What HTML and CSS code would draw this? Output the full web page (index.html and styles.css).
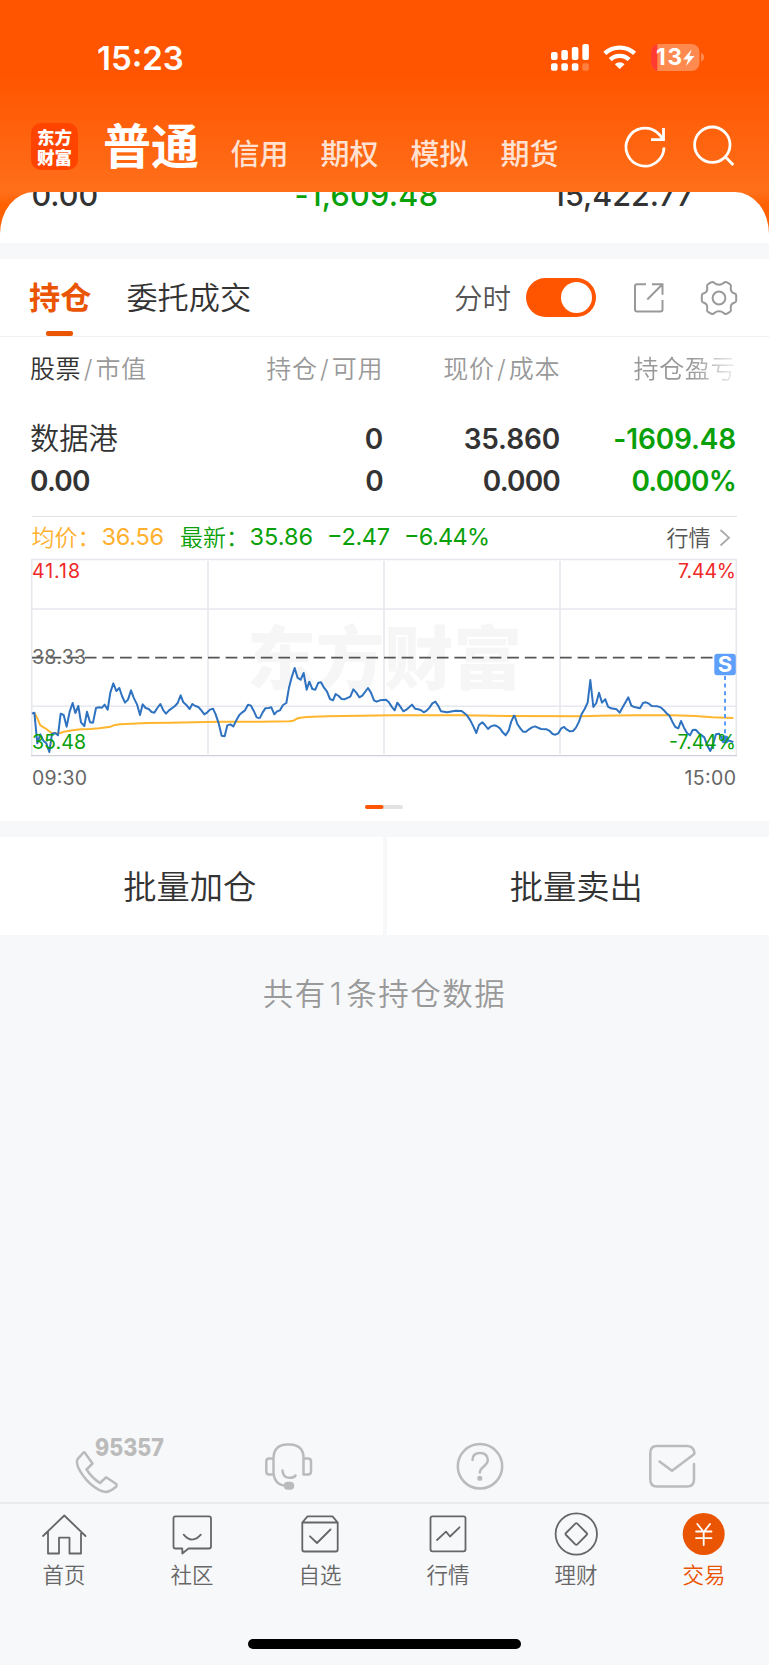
FILE: index.html
```html
<!DOCTYPE html>
<html lang="zh-CN">
<head>
<meta charset="utf-8">
<title>持仓</title>
<link rel="stylesheet" href="styles.css">
</head>
<body>
<div class="app">
  <header class="header">
    <div class="status">
      <span class="clock">15:23</span>
      <svg class="status-icons" width="156" height="30" viewBox="549 42 156 30">
        <g fill="#fff">
          <rect x="551" y="52" width="6.6" height="8" rx="2"/><rect x="561.3" y="50" width="6.6" height="10" rx="2"/><rect x="571.8" y="47" width="6.6" height="13" rx="2"/><rect x="582.3" y="44" width="6.6" height="16" rx="2"/>
          <rect x="551" y="63.3" width="6.6" height="7.4" rx="2"/><rect x="561.3" y="63.3" width="6.6" height="7.4" rx="2"/><rect x="571.8" y="63.3" width="6.6" height="7.4" rx="2"/><rect x="582.3" y="63.3" width="6.6" height="7.4" rx="2" opacity=".25"/>
          <path d="M619.7 69 L614.8 64.2 A7 7 0 0 1 624.6 64.2 Z"/>
        </g>
        <g fill="none" stroke="#fff" stroke-width="4.3">
          <path d="M604.8 53.4 A22 22 0 0 1 634.6 53.4"/>
          <path d="M610.3 59.6 A13.6 13.6 0 0 1 629.1 59.6"/>
        </g>
        <clipPath id="batt"><rect x="651" y="44" width="48.5" height="27" rx="8"/></clipPath>
        <g clip-path="url(#batt)"><rect x="651" y="44" width="49" height="27" fill="#ff8a50"/><rect x="651" y="44" width="6.3" height="27" fill="#ff3b30"/></g>
        <path d="M701 53 q3.2 1.5 3.2 4.3 t-3.2 4.3z" fill="#ff8a50"/>
        <text x="656" y="65.300" class="batt-num" textLength="26">13</text>
        <path d="M691.5 49.5 L683 59.5 h5 L686 66 L694.5 56 h-5z" fill="#fff"/>
      </svg>
    </div>
    <div class="topnav">
      <div class="logo"><span>东方</span><span>财富</span></div>
      <span class="acct-main">普通</span>
      <nav class="accts"><span>信用</span><span>期权</span><span>模拟</span><span>期货</span></nav>
      <svg class="top-icons" width="116" height="46" viewBox="622 124 116 46" fill="none" stroke="#fff" stroke-width="2.8">
        <path d="M664 147.5 A19 19 0 1 1 657.500 132.800 Q660.500 135 662.500 138.500"/><path d="M663.5 128 V139.7 H651"/>
        <circle cx="712.3" cy="144.7" r="17.7"/><path d="M725 156.5 L733.3 165"/>
      </svg>
    </div>
  </header>

  <section class="summary">
    <span class="sum a">0.00</span><span class="sum b">-1,609.48</span><span class="sum c">15,422.77</span>
  </section>

  <section class="panel">
    <div class="tabs">
      <span class="tab active">持仓</span>
      <span class="tab">委托成交</span>
      <span class="fs">分时</span>
      <span class="toggle"><i></i></span>
      <svg class="export" width="32" height="32" viewBox="633 282 32 32" fill="none" stroke="#999" stroke-width="2">
        <path d="M646 284.2 H637 Q635 284.2 635 286.2 V309.500 Q635 311.500 637 311.500 H660.500 Q662.500 311.500 662.500 309.500 V300"/><path d="M652 284.200 H662.500 V294.800 M662.200 284.500 L647.300 299.500"/>
      </svg>
      <svg class="gear" width="38" height="38" viewBox="700 279 38 38" fill="none" stroke="#999" stroke-width="2">
        <circle cx="719" cy="298" r="6.4"/>
        <path d="M711.500 282.200 Q713 281.500 714.300 283 Q716.500 284.700 719 284.700 T723.700 283 Q725 281.500 726.500 282.200 L730 284.200 Q731.500 285.300 730.800 287.300 C730.400 290.500 731.500 292.700 734.700 293.500 Q736.200 294 736.200 295.500 V300.500 Q736.200 302 734.700 302.500 C731.500 303.300 730.400 305.500 730.800 308.700 Q731.500 310.700 730 311.800 L726.500 313.800 Q725 314.500 723.700 313 Q721.500 311.300 719 311.300 T714.300 313 Q713 314.500 711.500 313.800 L708 311.800 Q706.500 310.700 707.200 308.700 C707.600 305.500 706.500 303.300 703.300 302.500 Q701.800 302 701.800 300.500 V295.500 Q701.800 294 703.300 293.500 C706.500 292.700 707.600 290.500 707.200 287.300 Q706.500 285.300 708 284.200 Z"/>
      </svg>
    </div>
    <div class="cols">
      <span><b>股票</b><em>/</em>市值</span><span>持仓<em>/</em>可用</span><span>现价<em>/</em>成本</span><span class="fade">持仓盈亏</span>
    </div>
    <div class="row"><span class="name">数据港</span><span>0</span><span>35.860</span><span class="down">-1609.48</span></div>
    <div class="row second"><span>0.00</span><span>0</span><span>0.000</span><span class="down">0.000%</span></div>

    <svg class="chart" width="769" height="309" viewBox="0 512 769 309">
      <path d="M32 516.500 H737" stroke="#e0e2e6" stroke-width="1.2"/>
      <g class="legend">
        <g fill="#ffb02e"><text x="31.500" y="545.500" class="cjk">均价：</text><text x="101.500" y="545" textLength="62.500">36.56</text></g>
        <g fill="#09a009"><text x="180" y="545.500" class="cjk">最新：</text><text x="249.500" y="545" textLength="63.500">35.86</text><text x="327" y="545" textLength="63">−2.47</text><text x="404" y="545" textLength="86">−6.44%</text></g>
        <text x="666.500" y="545.500" class="cjk more">行情</text>
      </g>
      <path d="M720.500 530 L729 537.700 L720.500 545.500" fill="none" stroke="#aaa" stroke-width="1.8"/>
      <text class="wm" x="247" y="684" textLength="275">东方财富</text>
      <g fill="none" stroke="#e6e8ee" stroke-width="1.600">
        <path d="M32 609 H736 M32 706.200 H736 M208 561 V754 M384 561 V754 M560 561 V754"/>
        <path d="M31.700 755.500 V559.500 H736.300 V755.500"/>
        <path d="M31 755.600 H737" stroke="#cfd1d8" stroke-width="1.300"/>
      </g>
      <path d="M32 657.700 H726" stroke="#555" stroke-width="1.700" stroke-dasharray="11.700 5.900"/>
      <g transform="translate(20 505) scale(.33333)" fill="none" stroke-linejoin="round" stroke-width="6">
        <g stroke="#ffb62e">
          <polyline points="43,623 52,640 61,661 79,672 96,685 122,684 131,680 158,676 183,673 210,672 237,670 272,665 281,661 300,658 333,656 380,654 450,653 600,650 720,650"/>
          <polyline transform="translate(720)" points="0,650 88,649 100,647 115,639 140,636 200,634 400,631 600,631 747,633"/>
          <polyline transform="translate(1467)" points="0,633 220,634 270,632 380,631 490,631 560,633 610,637 673,639"/>
        </g>
        <g stroke="#2e72c0">
          <polyline points="36,626 43,623 52,715 61,688 70,707 79,715 88,741 96,686 105,684 114,691 122,626 131,630 140,665 149,620 158,594 166,624 175,603 183,652 193,663 201,620 210,652 219,653 228,609 237,607 246,608 254,599 263,614 271,563 280,535 289,558 298,549 306,573 315,593 324,584 333,556 341,578 351,598 360,630 368,598 377,609 386,612 395,621 403,623 412,609 421,597 430,616 438,626 447,616 465,603 473,594 482,571 490,592 500,601 509,612 517,597 526,603 535,606 544,616 553,628 562,622 570,614 579,611 587,628 596,655 605,692 614,694 622,661 631,658 640,664 649,646 658,630 667,622 675,616 684,599 693,602 701,617 710,637 719,640"/>
          <polyline transform="translate(720)" points="-1,640 8,622 16,610 26,609 34,607 43,628 51,619 60,616 69,600 79,594 87,548 95,517 104,489 113,519 122,524 131,504 140,554 148,530 157,552 166,554 175,533 183,532 192,548 201,560 210,582 219,586 227,567 236,573 245,582 253,583 271,575 280,553 289,563 298,577 307,572 324,549 333,563 342,586 350,590 360,586 378,584 386,591 395,605 404,616 412,593 421,605 430,619 439,614 456,599 465,611 474,613 482,615 491,622 500,617 509,607 517,595 526,590 535,603 543,619 561,622 587,617 605,618 620,630 631,646 640,664 649,684 657,660 667,652 675,660 684,672 693,664 702,661 710,663 720,670 728,682 737,691 746,677 754,649 763,630"/>
          <polyline transform="translate(1467)" points="16,630 25,657 34,670 42,680 51,680 60,673 69,667 78,664 96,672 113,673 122,678 131,687 139,689 148,685 156,671 165,666 174,674 183,679 192,678 201,668 210,650 218,627 227,612 236,593 244,525 253,606 262,594 270,563 279,593 289,583 297,605 306,610 323,613 332,623 341,607 350,591 358,577 367,602 376,606 393,610 402,594 411,592 420,596 428,603 446,604 455,607 463,614 472,624 482,633 490,650 499,666 508,670 516,648 525,668 534,684 543,691 551,675 560,674 569,684 586,697 595,722 604,738 612,718 621,688 630,686 640,701 648,703 673,711"/>
        </g>
      </g>
      <path d="M725 676 V735" stroke="#5a9bf8" stroke-width="2" stroke-dasharray="4 3.600"/>
      <circle cx="725" cy="739.500" r="4" fill="#3a7fe0"/>
      <rect x="714.300" y="653.700" width="21.500" height="21.500" rx="3" fill="#5f9ffc"/>
      <text class="sell" x="725" y="672.300" text-anchor="middle">S</text>
      <g class="axis">
        <g fill="#f02828"><text x="32" y="578.300" textLength="48">41.18</text><text x="678" y="578.300" textLength="58">7.44%</text></g>
        <g fill="#666"><text x="32" y="664.300" textLength="54">38.33</text><text x="32" y="785.300" textLength="55">09:30</text><text x="684.500" y="785.300" textLength="51.500">15:00</text></g>
        <g fill="#09a009"><text x="32" y="749.300" textLength="54">35.48</text><text x="669" y="749.300" textLength="67">-7.44%</text></g>
      </g>
      <rect x="365" y="805" width="38" height="4" rx="2" fill="#e3e3e3"/><rect x="365" y="805" width="18.500" height="4" rx="2" fill="#ff5500"/>
    </svg>
  </section>

  <section class="batch"><span>批量加仓</span><span>批量卖出</span></section>
  <p class="count">共有<i>1</i>条持仓数据</p>

  <footer class="bottom">
    <svg class="support" width="769" height="71" viewBox="0 1431 769 71" fill="none" stroke="#bbb" stroke-width="2.500" stroke-linejoin="round" stroke-linecap="round">
      <path d="M83.500 1452.500 L77.800 1458.800 Q76 1461.500 78 1467 Q82 1476 90.500 1484 Q99.500 1491.500 105.500 1492 Q110 1492 116.300 1486.500 Q117.300 1485.300 116.300 1484 L106 1477.300 L100 1483 Q92.500 1478.500 86.500 1469.500 L92.500 1463.500 L84.800 1452.800 Q84.200 1452 83.500 1452.500Z"/>
      <text class="hotline" x="95" y="1456" textLength="69" lengthAdjust="spacingAndGlyphs">95357</text>
      <path d="M273.500 1472 V1458 Q274 1444.500 287.500 1444.500 H290 Q303.500 1445 303.500 1458 V1474.500 M273.500 1458.500 H269 Q266.300 1458.500 266.300 1461.500 V1471.500 Q266.300 1474.500 269 1474.500 H273.500 M303.500 1458.500 H308 Q311 1458.500 311 1461.500 V1471.500 Q311 1474.500 308 1474.500 H303.500 M273.500 1472 Q274 1485 286 1485.700 M282.500 1470.500 Q283 1477.500 289 1477.800 Q294 1478 295.500 1475.500"/>
      <rect x="285" y="1483" width="8" height="5.500" rx="2.700" fill="#bbb"/>
      <circle cx="480" cy="1466.300" r="22.200"/><path d="M472.500 1460 Q472.500 1453 480 1453 T487.800 1460 Q487.800 1463 483.800 1466.500 Q479.800 1469.500 479.800 1472.500"/><circle cx="479.800" cy="1478.300" r="1.300" fill="#bbb"/>
      <path d="M694 1464 V1479.500 Q694 1486.500 687 1486.500 H657 Q650.300 1486.500 650.300 1479.500 V1453 Q650.300 1446 657 1446 H687 Q693 1446 694.300 1452 V1454 L672 1470.800 L659.500 1461.500"/>
    </svg>
    <nav class="tabbar">
      <a><svg width="50" height="46" viewBox="39 1512 50 46"><path d="M43 1536 L64.300 1515.500 L85.500 1536 M48 1531.500 V1553.500 H59 V1537.700 H69.500 V1553.500 H81 V1531.500"/></svg>首页</a>
      <a><svg width="50" height="46" viewBox="167 1512 50 46"><path d="M175.500 1516.300 H209 Q211 1516.300 211 1518.300 V1546.500 Q211 1548.500 209 1548.500 H188.500 L182.300 1553.500 V1548.500 H175.500 Q173.500 1548.500 173.500 1546.500 V1518.300 Q173.500 1516.300 175.500 1516.300Z M183.700 1534.700 Q192 1544.500 200.800 1534.700"/></svg>社区</a>
      <a><svg width="50" height="46" viewBox="295 1512 50 46"><path d="M302.300 1522.500 H337.700 V1549.500 Q337.700 1551.500 335.700 1551.500 H304.300 Q302.300 1551.500 302.300 1549.500Z L307.500 1516.300 H332.500 L337.700 1522.500 M310 1536.300 L317 1543 L330.500 1529.500"/></svg>自选</a>
      <a><svg width="50" height="46" viewBox="423 1512 50 46"><rect x="430.500" y="1516.300" width="35" height="35" rx="2"/><path d="M437 1540 L446 1531.700 L450 1536.500 L459.500 1527.300"/></svg>行情</a>
      <a><svg width="50" height="46" viewBox="551 1512 50 46"><circle cx="576.300" cy="1534" r="20.700"/><path d="M575.300 1523.700 Q576.300 1522.700 577.300 1523.700 L586.600 1533 Q587.600 1534 586.600 1535 L577.300 1544.300 Q576.300 1545.300 575.300 1544.300 L566 1535 Q565 1534 566 1533Z"/></svg>理财</a>
      <a class="on"><svg width="50" height="46" viewBox="679 1512 50 46"><circle cx="703.700" cy="1534" r="21" fill="#ea5504" stroke="none"/><path stroke="#fff" d="M697.300 1524 L703.700 1532 L710 1524 M703.700 1532 V1545 M696 1531.500 H711.500 M696 1538.200 H711.500"/></svg>交易</a>
    </nav>
    <div class="home-bar"></div>
  </footer>
</div>
</body>
</html>
```
FILE: styles.css
```css
* { box-sizing: border-box; }
body { margin: 0; font-family: Inter, "Noto Sans CJK SC", sans-serif; color: #333; background: #f7f8fa; }
i, em { font-style: normal; }
.app { width: 769px; height: 1665px; display: flex; flex-direction: column; overflow: hidden; background: #f7f8fa; }

.header { height: 240px; flex: none; background: linear-gradient(#ff5500 0 75px, #ff6f1a 192px, #ff6000 205px); color: #fff; }
.status { height: 114px; padding: 42px 64px 0 97px; display: flex; justify-content: space-between; align-items: flex-start; }
.clock { font-size: 33px; font-weight: 600; line-height: 32px; }
.batt-num { font: 700 22.500px Inter, sans-serif; fill: #fff; }
.topnav { height: 64px; display: flex; padding-left: 31px; }
.logo { width: 47px; height: 47px; margin-top: 9px; padding-top: 4px; border-radius: 10px; background: #ff4400; display: flex; flex-direction: column; align-items: center; font: 900 17.5px/19.500px "Noto Sans CJK SC", sans-serif; }
.acct-main { margin-left: 25px; font-size: 48px; font-weight: 700; line-height: 65px; width: 127.500px; white-space: nowrap; }
.accts { display: flex; gap: 32px; font-size: 29px; font-weight: 500; line-height: 81px; color: rgba(255,255,255,.82); }
.top-icons { margin: 10px 31px 0 auto; }

.summary { height: 51px; margin-top: -48px; flex: none; overflow: hidden; display: grid; grid-template-columns: 263px 200px 1fr; padding: 0 75px 0 31.500px; background: #fff; border-radius: 34px 34px 0 0 / 42px 42px 0 0; font-size: 30.500px; font-weight: 500; line-height: 36px; }
.sum { margin-top: -15px; }
.sum.b { color: #09a009; letter-spacing: .300px; }
.sum.c { text-align: right; }

.panel { margin-top: 16px; height: 562px; flex: none; background: #fff; }
.tabs { height: 78px; border-bottom: 1.500px solid #eef0f2; padding: 0 31px 0 29px; display: flex; align-items: center; }
.tab { font-size: 31.200px; font-weight: 350; line-height: 79px; height: 77px; position: relative; white-space: nowrap; }
.tab + .tab { margin-left: 35px; }
.tab.active { color: #ea5504; font-weight: 700; }
.tab.active::after { content: ""; position: absolute; left: 17px; bottom: 0; width: 27px; height: 5px; border-radius: 2px; background: #ea5504; }
.fs { margin-left: auto; margin-top: -3px; font-size: 28.500px; font-weight: 350; color: #555; }
.toggle { width: 70px; height: 39px; margin: 0 37px 0 15px; border-radius: 20px; background: #ff5500; display: flex; justify-content: flex-end; align-items: center; padding-right: 4px; }
.toggle i { width: 31px; height: 31px; border-radius: 50%; background: #fff; }
.gear { margin-left: 35px; }
.cols, .row { display: grid; grid-template-columns: 176px 177px 177px 176px; padding-left: 30px; }
.cols span:not(:first-child), .row span:not(:first-child) { text-align: right; }
.cols { height: 81px; padding-top: 14px; font-size: 25px; line-height: 36px; letter-spacing: .600px; color: #999; font-weight: 350; }
.cols b { font-weight: 350; color: #333; }
.cols em { margin: 0 2.500px; }
.fade { -webkit-mask-image: linear-gradient(90deg, #000 75%, transparent 104%); }
.row { font-size: 28px; font-weight: 600; height: 42px; line-height: 42px; letter-spacing: -.150px; }
.row.second { letter-spacing: -.800px; }
.row .name { font-weight: 350; font-size: 29.300px; letter-spacing: 0; }
.down { color: #09a009; }
.chart { display: block; margin-top: 10px; }
.legend { font: 400 23.500px Inter, sans-serif; }
.legend .cjk { font-family: "Noto Sans CJK SC", sans-serif; font-size: 23px; font-weight: 350; }
.legend .more { font-size: 22px; fill: #555; }
.wm { font: 900 69px "Noto Sans CJK SC", sans-serif; fill: #f6f6f6; }
.axis { font: 400 19.500px Inter, sans-serif; }
.sell { font: 700 22px Inter, sans-serif; fill: #fff; }

.batch { display: flex; gap: 4px; margin-top: 16px; height: 98px; flex: none; }
.batch span { flex: 1; background: #fff; text-align: center; font-size: 33.300px; font-weight: 350; line-height: 100px; padding-right: 3px; }
.count { margin: 36px 0 0; text-align: center; color: #999; font-size: 30.500px; font-weight: 350; line-height: 45px; letter-spacing: 1.500px; }
.count i { margin: 0 3px; }

.bottom { margin-top: auto; height: 234px; flex: none; }
.support { display: block; }
.hotline { font: 800 24px Inter, sans-serif; fill: #bbb; stroke: none; }
.tabbar { height: 137px; border-top: 2px solid #e9ebed; padding-top: 8px; display: flex; }
.tabbar a { width: 128px; display: flex; flex-direction: column; align-items: center; font-size: 21.500px; font-weight: 350; line-height: 34px; color: #666; }
.tabbar svg { fill: none; stroke: #666; stroke-width: 1.800; stroke-linejoin: round; stroke-linecap: round; }
.tabbar .on { color: #ea5504; }
.home-bar { width: 273px; height: 10px; border-radius: 5px; background: #000; margin-left: 248px; }
```
